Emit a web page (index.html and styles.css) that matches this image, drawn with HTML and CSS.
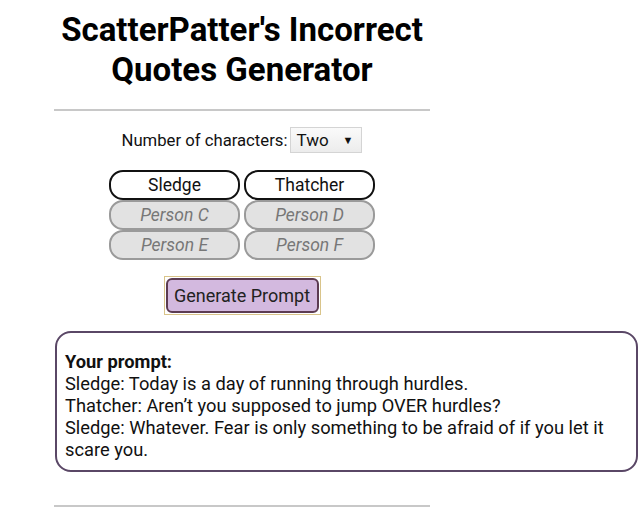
FILE: index.html
```html
<!DOCTYPE html>
<html>
<head>
<meta charset="utf-8">
<link rel="stylesheet" href="styles.css">
</head>
<body>
<div class="page">
  <h1 class="title">ScatterPatter's Incorrect<br>Quotes Generator</h1>
  <hr class="rule">
  <div class="count-row">
    <span class="count-label">Number of characters:</span>
    <span class="select"><span class="select-val">Two</span><span class="select-arrow">▼</span></span>
  </div>
  <div class="chars">
    <div class="char active">Sledge</div>
    <div class="char active">Thatcher</div>
    <div class="char">Person C</div>
    <div class="char">Person D</div>
    <div class="char">Person E</div>
    <div class="char">Person F</div>
  </div>
  <div class="gen-wrap">
    <div class="gen-frame"><button class="gen">Generate Prompt</button></div>
  </div>
  <div class="prompt">
    <b>Your prompt:</b><br>
    Sledge: Today is a day of running through hurdles.<br>
    Thatcher: Aren’t you supposed to jump OVER hurdles?<br>
    Sledge: Whatever. Fear is only something to be afraid of if you let it scare you.
  </div>
  <hr class="rule bottom">
</div>
</body>
</html>
```
FILE: styles.css
```css
html, body {
  margin: 0;
  padding: 0;
  background: #fff;
}
body {
  font-family: Roboto, "Liberation Sans", sans-serif;
  color: #111;
}
.page {
  padding-left: 54px;
  width: 376px;
}
.title {
  margin: 10px 0 0;
  font-size: 33px;
  line-height: 40px;
  font-weight: 700;
  text-align: center;
  color: #000;
}
.rule {
  margin: 19px 0 0;
  border: 0;
  height: 2px;
  background: #c8c8c8;
}
.count-row {
  display: flex;
  justify-content: center;
  align-items: center;
  gap: 3px;
  margin-top: 16px;
  font-size: 16.7px;
  height: 26px;
}
.select {
  display: flex;
  align-items: center;
  justify-content: space-between;
  width: 60px;
  height: 24px;
  padding: 0 5px;
  border: 1px solid #d4d4d4;
  background: linear-gradient(#fafafa, #ececec);
  font-size: 17px;
}
.select-arrow {
  font-size: 11px;
  margin-right: 3px;
}
.chars {
  display: grid;
  grid-template-columns: 131px 131px;
  justify-content: center;
  column-gap: 4px;
  row-gap: 0;
  margin-top: 17px;
}
.char {
  height: 26px;
  line-height: 26px;
  border: 2px solid #9a9a9a;
  border-radius: 14px;
  background: #e2e2e2;
  color: #777;
  font-style: italic;
  font-size: 17.5px;
  text-align: center;
}
.char.active {
  border-color: #111;
  background: #fff;
  color: #111;
  font-style: normal;
}
.gen-wrap {
  display: flex;
  justify-content: center;
  margin-top: 16px;
}
.gen-frame {
  border: 1px solid #d9c48a;
  padding: 1px;
}
.gen {
  display: block;
  width: 153px;
  height: 35px;
  border: 2px solid #5c3b52;
  border-radius: 6px;
  background: #d3b9df;
  font-family: Roboto, "Liberation Sans", sans-serif;
  font-size: 18px;
  color: #222;
  padding: 0;
}
.prompt {
  box-sizing: border-box;
  width: 583px;
  margin: 16px 0 0 1px;
  padding: 18px 4px 9px 8px;
  border: 2px solid #5a4766;
  border-radius: 16px;
  font-size: 18.3px;
  line-height: 22px;
  color: #111;
}
.prompt b {
  font-weight: 700;
}
.rule.bottom {
  margin-top: 33px;
}
```
